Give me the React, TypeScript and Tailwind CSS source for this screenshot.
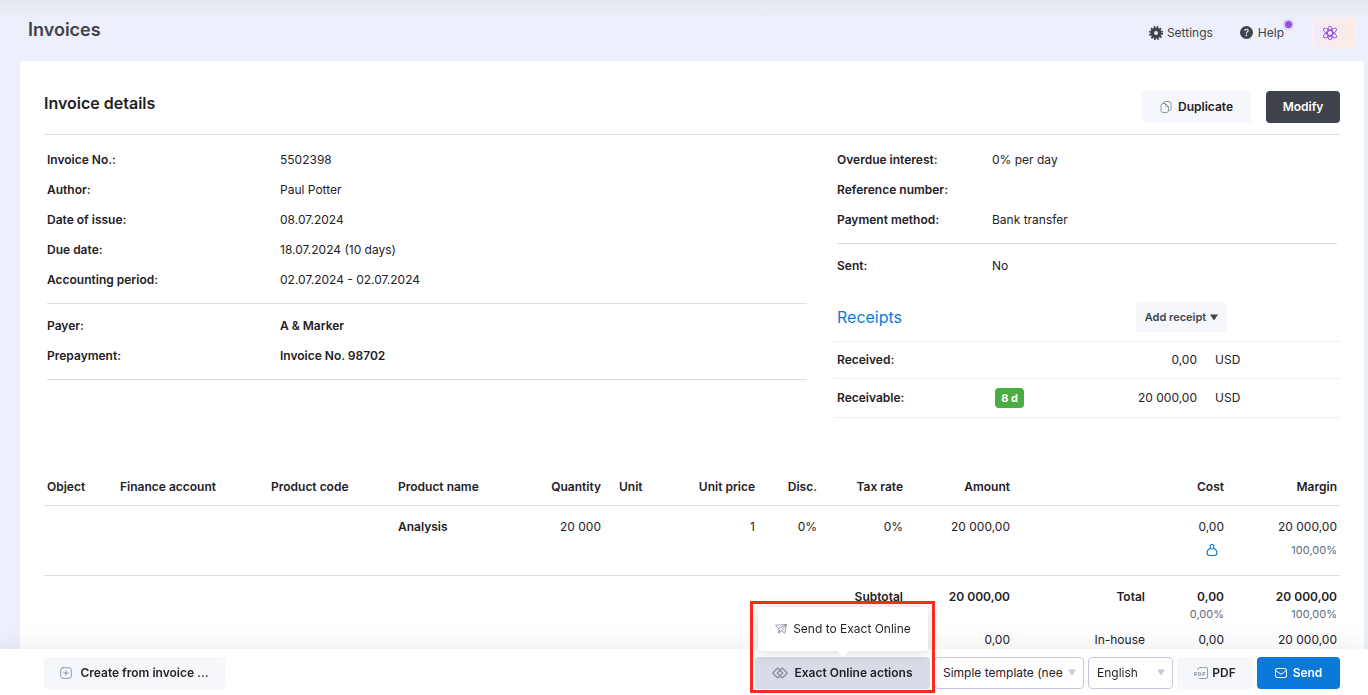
import type { ReactNode } from "react";
import { BsQuestionCircleFill } from "react-icons/bs";

function GearIcon() {
  return (
    <svg className="size-3.5" viewBox="0 0 28 28" fill="none" aria-hidden="true">
      <circle cx="14" cy="14" r="7.5" stroke="#3f434b" strokeWidth="7" />
      <circle cx="14" cy="14" r="12" stroke="#3f434b" strokeWidth="4" strokeDasharray="3.4 2.883" />
    </svg>
  );
}

function AtomIcon() {
  return (
    <svg className="size-4" viewBox="0 0 32 32" fill="none" stroke="#9254de" strokeWidth="2" aria-hidden="true">
      <ellipse cx="16" cy="16" rx="5.5" ry="13.5" />
      <ellipse cx="16" cy="16" rx="5" ry="15" transform="rotate(56 16 16)" />
      <ellipse cx="16" cy="16" rx="5" ry="15" transform="rotate(-56 16 16)" />
      <circle cx="16" cy="16" r="5.5" />
    </svg>
  );
}

function CopyIcon() {
  return (
    <svg className="size-3" viewBox="0 0 24 24" fill="none" stroke="#868c9c" strokeWidth="1.8" aria-hidden="true">
      <path d="M7 5V4a3 3 0 0 1 3-3h8a4 4 0 0 1 4 4v10a4 4 0 0 1-4 4" />
      <path d="M2 9a4 4 0 0 1 4-4h5l6 6v8a4 4 0 0 1-4 4H6a4 4 0 0 1-4-4z" />
      <path d="M11 5v4a2 2 0 0 0 2 2h4" />
    </svg>
  );
}

function PlusBoxIcon() {
  return (
    <svg className="size-3" viewBox="0 0 24 24" fill="none" stroke="#868c9c" strokeWidth="1.8" strokeLinecap="round" aria-hidden="true">
      <rect x="1.5" y="1.5" width="21" height="21" rx="4" />
      <path d="M12 7.500v9M7.500 12h9" />
    </svg>
  );
}

function PlaneIcon() {
  return (
    <svg className="h-3 w-3" viewBox="0 0 24 24" fill="none" stroke="#868c9c" strokeWidth="1.7" strokeLinejoin="round" aria-hidden="true">
      <path d="M1 4.500 23 3 19.500 20.500 12.500 15.500 8 20.500 7 11z" />
      <path d="M7 11 23 3 12.500 15.500M8 20.500l1.500-6.500" />
    </svg>
  );
}

function ExactIcon() {
  return (
    <svg className="h-3 w-4" viewBox="0 0 32 24" fill="none" stroke="#868c9c" strokeWidth="2.300" strokeLinejoin="round" aria-hidden="true">
      <path d="M11.500 2 21.500 12 11.500 22 1.500 12z" />
      <path d="M20.500 2 30.500 12 20.500 22 10.500 12z" />
    </svg>
  );
}

function PdfIcon() {
  return (
    <svg className="h-3 w-3.5" viewBox="0 0 28 24" fill="none" stroke="#868c9c" strokeWidth="1.7" aria-hidden="true">
      <path d="M8 6V4a3 3 0 0 1 3-3h13a3 3 0 0 1 3 3v16a3 3 0 0 1-3 3H11a3 3 0 0 1-2.500-1.500" />
      <path d="M1.500 18v-7h2.500a2 2 0 0 1 0 4.200H1.500M9.500 11v6.200h1.500a3 3 0 0 0 0-6.200zM18 18v-7h5M18 14.500h4" />
    </svg>
  );
}

function MailIcon() {
  return (
    <svg className="h-3 w-3" viewBox="0 0 24 24" fill="none" stroke="#fff" strokeWidth="2" strokeLinecap="round" strokeLinejoin="round" aria-hidden="true">
      <path d="M7 3H4a3 3 0 0 0-3 3v12a3 3 0 0 0 3 3h16a3 3 0 0 0 3-3V6a3 3 0 0 0-3-3z" />
      <path d="m1.500 7 8.500 6.500a3.300 3.300 0 0 0 4 0L22.500 7" />
    </svg>
  );
}

function PersonIcon() {
  return (
    <svg className="h-3 w-3" viewBox="0 0 24 24" fill="none" stroke="#0b79d9" strokeWidth="2.200" aria-hidden="true">
      <path d="M8.500 5a3.500 4 0 0 1 7 0v2a3.500 3 0 0 1-7 0z" />
      <path d="M8.500 8.500C5 10.500 2.200 13.500 2.200 17.500 2.200 21 5 23 8 23h8c3 0 5.800-2 5.800-5.500 0-4-2.800-7-6.300-9" />
    </svg>
  );
}

function Caret({ className }: { className: string }) {
  return (
    <svg className={className} viewBox="0 0 8 7" fill="currentColor" aria-hidden="true">
      <path d="M0 .5h8L4 6.500z" />
    </svg>
  );
}

function Fields({ rows, labelWidth, strong }: { rows: [string, string][]; labelWidth: string; strong?: boolean }) {
  return (
    <dl>
      {rows.map(([label, value]) => (
        <div key={label} className="flex h-[30px] items-center">
          <dt className={`${labelWidth} shrink-0 font-semibold`}>{label}</dt>
          <dd className={strong ? "font-semibold" : ""}>{value}</dd>
        </div>
      ))}
    </dl>
  );
}

function SelectBox({ label, value, className }: { label: string; value: string; className: string }) {
  return (
    <div className={`relative ${className}`}>
      <select
        aria-label={label}
        defaultValue={value}
        className="h-8 w-full appearance-none rounded border border-[#c3cadc] bg-white pr-5 pl-2"
      >
        <option>{value}</option>
      </select>
      <Caret className="pointer-events-none absolute top-3 right-2 h-[7px] w-2 text-[#c3cadc]" />
    </div>
  );
}

function SoftButton({ children, className }: { children: ReactNode; className: string }) {
  return (
    <button type="button" className={`flex h-8 items-center rounded font-semibold ${className}`}>
      {children}
    </button>
  );
}

const columnWidths = [
  "w-[73px]", "w-[151px]", "w-[127px]", "w-[115px]", "w-[94px]", "w-[86px]", "w-[68px]",
  "w-[62px]", "w-[86px]", "w-[107px]", "w-[135px]", "w-[79px]", "w-[113px]",
];

export default function App() {
  return (
    <div className="flex h-screen flex-col bg-[#edf0fa] font-['Inter',sans-serif] text-[12px] leading-4 text-[#1f2126]">
      <div className="flex min-h-0 flex-1 flex-col bg-linear-to-b from-[#e4e8f0] to-[#edf0fa] to-[20px]">
        <header className="flex h-[61px] shrink-0 items-center justify-between pr-3 pb-0.5 pl-7 text-[#3f434b]">
          <h1 className="text-[18px] leading-6 font-semibold">Invoices</h1>
          <nav className="flex items-center pt-1.5">
            <a href="#settings" className="flex items-center gap-1">
              <GearIcon />
              Settings
            </a>
            <a href="#help" className="relative ml-[27px] flex items-center gap-[5px]">
              <BsQuestionCircleFill className="size-[13px]" />
              Help
              <span className="absolute -top-1.5 -right-2.5 size-[11px] rounded-full border-2 border-[#dccdf5] bg-[#9254de]" />
            </a>
            <button
              type="button"
              aria-label="Assistant"
              className="ml-7 flex h-8 w-11 items-center rounded border-2 border-[#faeff0] bg-linear-to-r from-[#f4eafc] to-[#fcecdf] pl-2"
            >
              <AtomIcon />
            </button>
          </nav>
        </header>

        <main className="mr-1 ml-5 min-h-0 flex-1 overflow-y-auto rounded-t bg-white px-6 pt-[30px] [scrollbar-width:none]">
          <div className="flex items-start justify-between border-b border-[#d9dee8] pb-[11px]">
            <h2 className="text-[16px] leading-6 font-semibold">Invoice details</h2>
            <div className="flex gap-[15px]">
              <SoftButton className="w-[109px] justify-center gap-1.5 bg-[#f6f7fc]">
                <CopyIcon />
                Duplicate
              </SoftButton>
              <SoftButton className="w-[74px] justify-center bg-[#3f434b] text-white">Modify</SoftButton>
            </div>
          </div>

          <div className="grid grid-cols-[763fr_506fr] gap-[27px] pt-2.5">
            <section className="min-w-0 pl-[3px]">
              <div className="border-b border-[#dcdee8] pb-2">
                <Fields
                  labelWidth="w-[233px]"
                  rows={[
                    ["Invoice No.:", "5502398"],
                    ["Author:", "Paul Potter"],
                    ["Date of issue:", "08.07.2024"],
                    ["Due date:", "18.07.2024 (10 days)"],
                    ["Accounting period:", "02.07.2024 - 02.07.2024"],
                  ]}
                />
              </div>
              <div className="border-b border-[#dcdee8] pt-[7px] pb-2">
                <Fields
                  strong
                  labelWidth="w-[233px]"
                  rows={[
                    ["Payer:", "A & Marker"],
                    ["Prepayment:", "Invoice No. 98702"],
                  ]}
                />
              </div>
            </section>

            <section className="min-w-0">
              <div className="mx-[3px] border-b border-[#dcdee8] pb-2">
                <Fields
                  labelWidth="w-[155px]"
                  rows={[
                    ["Overdue interest:", "0% per day"],
                    ["Reference number:", ""],
                    ["Payment method:", "Bank transfer"],
                  ]}
                />
              </div>
              <div className="px-[3px] pt-[7px]">
                <Fields labelWidth="w-[155px]" rows={[["Sent:", "No"]]} />
              </div>
              <div className="mt-[21px] flex items-center border-b border-[#edeef6] pb-[9px] pl-[3px]">
                <h3 className="w-[299px] text-[16px] leading-6 text-[#0b79d9]">Receipts</h3>
                <button
                  type="button"
                  className="flex h-[30px] w-[91px] items-center justify-center gap-1 rounded bg-[#f6f7fc] text-[11px] font-semibold text-[#3f434b]"
                >
                  Add receipt
                  <Caret className="h-[7px] w-2" />
                </button>
              </div>
              <div className="flex h-[37px] items-center border-b border-[#edeef6] pl-[3px]">
                <span className="w-[158px] font-semibold">Received:</span>
                <span className="ml-[29px] w-[173px] text-right">0,00</span>
                <span className="ml-[18px]">USD</span>
              </div>
              <div className="flex h-[39px] items-center border-b border-[#edeef6] pl-[3px]">
                <span className="w-[158px] font-semibold">Receivable:</span>
                <span className="flex h-5 w-[29px] items-center justify-center rounded bg-[#4aad3f] text-[11px] font-bold text-white">
                  8 d
                </span>
                <span className="w-[173px] text-right">20 000,00</span>
                <span className="ml-[18px]">USD</span>
              </div>
            </section>
          </div>

          <table className="mt-[52px] w-full table-fixed whitespace-nowrap">
            <colgroup>
              {columnWidths.map((width, i) => (
                <col key={i} className={width} />
              ))}
            </colgroup>
            <thead>
              <tr className="h-[35px] border-b border-[#dcdee3] [&>th]:px-[3px] [&>th]:font-semibold">
                <th className="text-left">Object</th>
                <th className="text-left">Finance account</th>
                <th className="text-left">Product code</th>
                <th className="text-left">Product name</th>
                <th className="text-right">Quantity</th>
                <th className="text-left"><span className="pl-3">Unit</span></th>
                <th className="text-right">Unit price</th>
                <th className="text-right">Disc.</th>
                <th className="text-right">Tax rate</th>
                <th className="text-right">Amount</th>
                <th />
                <th className="text-right">Cost</th>
                <th className="text-right">Margin</th>
              </tr>
            </thead>
            <tbody className="[&_td]:px-[3px] [&_td]:text-right [&_td]:align-top">
              <tr className="h-[70px] border-b border-[#dcdee3] [&>td]:pt-[13px]">
                <td colSpan={3} />
                <td className="font-semibold"><span className="block text-left">Analysis</span></td>
                <td>20 000</td>
                <td />
                <td>1</td>
                <td>0%</td>
                <td>0%</td>
                <td>20 000,00</td>
                <td />
                <td>
                  0,00
                  <span className="mt-[9px] flex justify-end pr-1.5"><PersonIcon /></span>
                </td>
                <td>
                  20 000,00
                  <span className="mt-[7px] block text-[11px] text-[#626b7c]">100,00%</span>
                </td>
              </tr>
              <tr className="font-semibold [&>td]:pt-[13px]">
                <td colSpan={9}>Subtotal</td>
                <td>20 000,00</td>
                <td>Total</td>
                <td>
                  0,00
                  <span className="mt-[3px] block text-[11px] leading-3 font-normal text-[#626b7c]">0,00%</span>
                </td>
                <td>
                  20 000,00
                  <span className="mt-[3px] block text-[11px] leading-3 font-normal text-[#626b7c]">100,00%</span>
                </td>
              </tr>
              <tr className="[&>td]:pt-3 [&>td]:pb-3">
                <td colSpan={9} />
                <td>0,00</td>
                <td>In-house</td>
                <td>0,00</td>
                <td>20 000,00</td>
              </tr>
            </tbody>
          </table>
        </main>
      </div>

      <footer className="relative flex h-[46px] shrink-0 items-center justify-between bg-white pt-0.5 pr-7 pl-11 shadow-[0_-4px_24px_rgba(30,35,60,0.07)]">
        <SoftButton className="w-[181px] justify-center gap-2 bg-[#f6f7fc]">
          <PlusBoxIcon />
          Create from invoice ...
        </SoftButton>
        <div className="flex gap-1">
          <div className="relative">
            <SoftButton className="w-[175px] justify-center gap-1.5 bg-[#d8dce6]">
              <ExactIcon />
              Exact Online actions
            </SoftButton>
            <div role="menu" className="absolute bottom-[38px] left-[3px] w-[170px] rounded bg-white shadow-[0_1px_14px_rgba(30,35,60,0.18)]">
              <button type="button" role="menuitem" className="flex h-11 w-full items-center justify-center gap-1.5">
                <PlaneIcon />
                Send to Exact Online
              </button>
              <svg className="absolute top-full left-1/2 h-[6px] w-3 -translate-x-1/2" viewBox="0 0 12 6" aria-hidden="true">
                <path d="M0 0h12L6 6z" fill="#fff" />
              </svg>
            </div>
            <div className="pointer-events-none absolute -top-14 -right-[5px] -bottom-1 -left-[5px] z-10 border-3 border-[#fa2a1c]" />
          </div>
          <SelectBox label="Template" value="Simple template (nee" className="w-[150px]" />
          <SelectBox label="Language" value="English" className="w-[85px]" />
          <SoftButton className="w-[76px] justify-center gap-1 bg-[#f6f7fc]">
            <PdfIcon />
            PDF
          </SoftButton>
          <SoftButton className="w-[83px] justify-center gap-1.5 bg-[#0b79d9] text-white">
            <MailIcon />
            Send
          </SoftButton>
        </div>
      </footer>
    </div>
  );
}
